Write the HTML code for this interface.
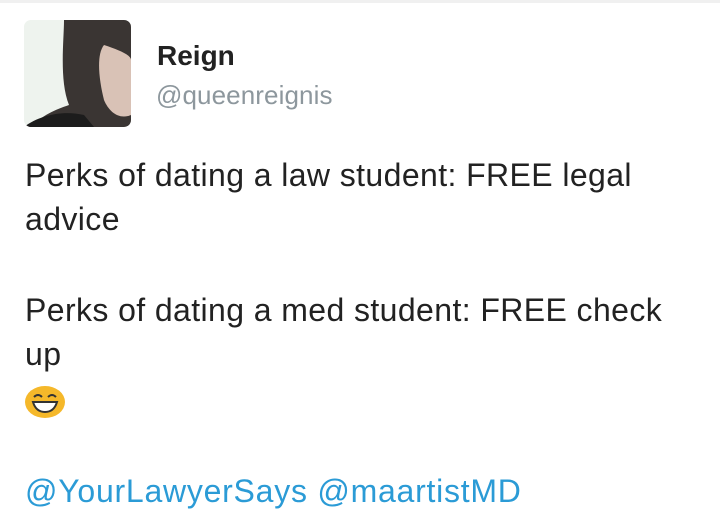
<!DOCTYPE html>
<html><head><style>
body{margin:0;width:720px;height:527px;background:#fff;overflow:hidden;font-family:"Liberation Sans",sans-serif;position:relative}
.t{position:absolute;left:25px;white-space:nowrap;font-size:32px;color:#222;letter-spacing:0.4px}
</style></head><body>
<div style="position:absolute;left:0;top:0;width:720px;height:3px;background:#f0f0f0"></div>
<div style="position:absolute;left:24px;top:20px;width:107px;height:107px;border-radius:7px;overflow:hidden;background:#eef3ee">
<svg width="107" height="107"><path d="M40 0 L107 0 L107 107 L5 107 C20 95 30 90 45 85 C35 60 40 20 40 0Z" fill="#3a3533"/><path d="M80 25 C95 30 107 35 107 40 L107 95 C95 100 85 92 80 80 C75 60 72 35 80 25Z" fill="#d9c2b6"/><path d="M0 107 C15 95 40 90 60 95 L70 107Z" fill="#1c1c1c"/></svg>
</div>
<div style="position:absolute;left:157px;top:40px;font-size:28px;font-weight:bold;color:#222">Reign</div>
<div style="position:absolute;left:156px;top:80px;font-size:26px;color:#8d979d;letter-spacing:0.1px">@queenreignis</div>
<div class="t" style="top:157px">Perks of dating a law student: FREE legal</div>
<div class="t" style="top:201px">advice</div>
<div class="t" style="top:292px">Perks of dating a med student: FREE check</div>
<div class="t" style="top:336px">up</div>
<svg style="position:absolute;left:24px;top:385px" width="42" height="34"><ellipse cx="21" cy="17" rx="20" ry="16" fill="#f5b82a"/><path d="M10 12 Q14 8 18 12 M24 12 Q28 8 32 12" stroke="#333" stroke-width="2" fill="none"/><path d="M9 17 H33 Q30 27 21 27 Q12 27 9 17Z" fill="#fff" stroke="#333" stroke-width="2"/></svg>
<div class="t" style="top:473px;color:#2b9bd6;letter-spacing:0.75px">@YourLawyerSays @maartistMD</div>
</body></html>
